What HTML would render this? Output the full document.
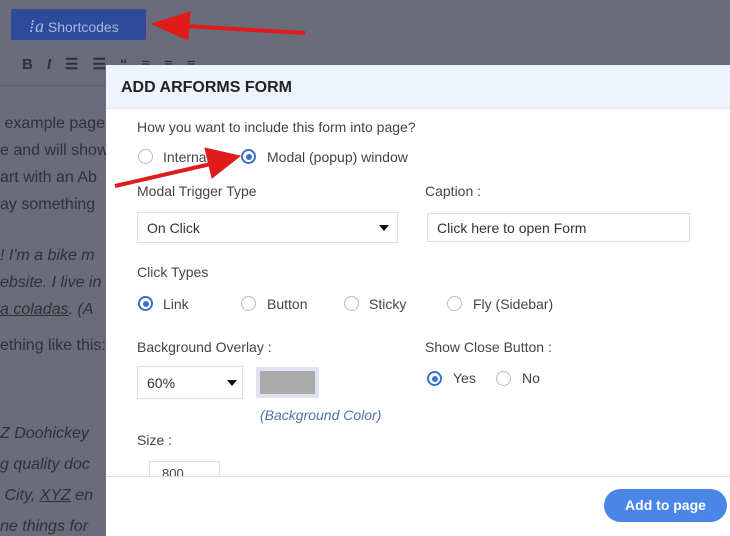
<!DOCTYPE html>
<html><head><meta charset="utf-8"><style>
*{margin:0;padding:0;box-sizing:border-box}
html,body{width:730px;height:536px;overflow:hidden}
body{background:#6a6c79;font-family:"Liberation Sans",sans-serif;position:relative}
.a{position:absolute;white-space:nowrap}
.bg{color:#2e303a;font-size:16px}
.m{position:absolute;left:106px;top:65px;width:624px;height:471px;background:#fff}
.t{color:#444;font-size:14px}
.r{position:absolute;width:15px;height:15px;border:1.5px solid #bbb;border-radius:50%;background:#fff}
.r.on{border:2px solid #3c6fc9}
.r.on::after{content:"";position:absolute;left:2.5px;top:2.5px;width:6px;height:6px;border-radius:50%;background:#3c6fc9}
.in{position:absolute;border:1px solid #ddd;background:#fff;font-size:14px;color:#333;padding-left:9px;display:flex;align-items:center}
.car{position:absolute;width:0;height:0;border-left:5px solid transparent;border-right:5px solid transparent;border-top:6px solid #111}
</style></head><body>
<div class="a" style="left:11px;top:9px;width:135px;height:31px;background:#2e4a9a;border-radius:2px;color:#aab8e0;font-size:14px;padding:7px 0 0 18px"><i style="font-family:'Liberation Serif';font-size:18px">⁞a</i> Shortcodes</div>
<div class="a" style="left:0;top:46px;width:110px;height:40px;border-bottom:1px solid #5e606c"></div>
<div class="a bg" style="left:22px;top:55px;font-size:15px;font-weight:bold;letter-spacing:14px">B<i>I</i>☰☰“≡≡≡</div>
<div class="a bg" style="left:0;top:110px;line-height:27px">&nbsp;example page<br>e and will show<br>art with an Ab<br>ay something</div>
<div class="a bg" style="left:0;top:242px;line-height:27px;font-style:italic">! I'm a bike m<br>ebsite. I live in<br><u>a coladas</u>. (A</div>
<div class="a bg" style="left:0;top:337px">ething like this:</div>
<div class="a bg" style="left:0;top:418px;line-height:31px;font-style:italic">Z Doohickey<br>g quality doc<br>&nbsp;City, <u>XYZ</u> en<br>ne things for</div>
<div class="m">
<div class="a" style="left:0;top:0;width:624px;height:44px;background:#eef4fd;border-bottom:1px solid #e2e6ee"></div>
<div class="a" style="left:15px;top:14px;font-size:16px;font-weight:bold;color:#222">ADD ARFORMS FORM</div>
<div class="a t" style="left:31px;top:54px">How you want to include this form into page?</div>
<div class="r" style="left:32px;top:84px"></div><div class="a t" style="left:57px;top:84px">Internal</div>
<div class="r on" style="left:135px;top:84px"></div><div class="a t" style="left:161px;top:84px">Modal (popup) window</div>
<div class="a t" style="left:31px;top:118px">Modal Trigger Type</div>
<div class="a t" style="left:319px;top:118px">Caption :</div>
<div class="in" style="left:31px;top:147px;width:261px;height:31px">On Click</div><div class="car" style="left:273px;top:160px"></div>
<div class="in" style="left:321px;top:148px;width:263px;height:29px">Click here to open Form</div>
<div class="a t" style="left:31px;top:199px">Click Types</div>
<div class="r on" style="left:32px;top:231px"></div><div class="a t" style="left:57px;top:231px">Link</div>
<div class="r" style="left:135px;top:231px"></div><div class="a t" style="left:161px;top:231px">Button</div>
<div class="r" style="left:238px;top:231px"></div><div class="a t" style="left:263px;top:231px">Sticky</div>
<div class="r" style="left:341px;top:231px"></div><div class="a t" style="left:367px;top:231px">Fly (Sidebar)</div>
<div class="a t" style="left:31px;top:274px">Background Overlay :</div>
<div class="a t" style="left:319px;top:274px">Show Close Button :</div>
<div class="in" style="left:31px;top:301px;width:106px;height:33px">60%</div><div class="car" style="left:121px;top:315px"></div>
<div class="a" style="left:150px;top:302px;width:63px;height:31px;background:#dde3f2;padding:4px"><div style="width:55px;height:23px;background:#aaa"></div></div>
<div class="a" style="left:154px;top:342px;font-size:14px;font-style:italic;color:#5570b0">(Background Color)</div>
<div class="r on" style="left:321px;top:306px"></div><div class="a t" style="left:347px;top:305px">Yes</div>
<div class="r" style="left:390px;top:306px"></div><div class="a t" style="left:416px;top:305px">No</div>
<div class="a t" style="left:31px;top:367px">Size :</div>
<div class="a" style="left:43px;top:396px;width:71px;height:15px;border:1px solid #ddd;border-bottom:none;overflow:hidden;font-size:13px;color:#444;padding:4px 0 0 12px">800</div>
<div class="a" style="left:0;top:411px;width:624px;height:60px;background:#fff;border-top:1px solid #ddd"></div>
<div class="a" style="left:498px;top:424px;width:123px;height:33px;background:#4a86e8;border-radius:17px;color:#fff;font-weight:bold;font-size:14px;text-align:center;line-height:33px">Add to page</div>
</div>
<svg class="a" style="left:0;top:0" width="730" height="536"><g fill="#e01b1b" stroke="#e01b1b"><path d="M305 33 L185 26" stroke-width="4"/><polygon points="152,24 190,12 188,40"/><path d="M115 186 L215 163" stroke-width="4"/><polygon points="240,156 205,148 212,178"/></g></svg>
</body></html>
